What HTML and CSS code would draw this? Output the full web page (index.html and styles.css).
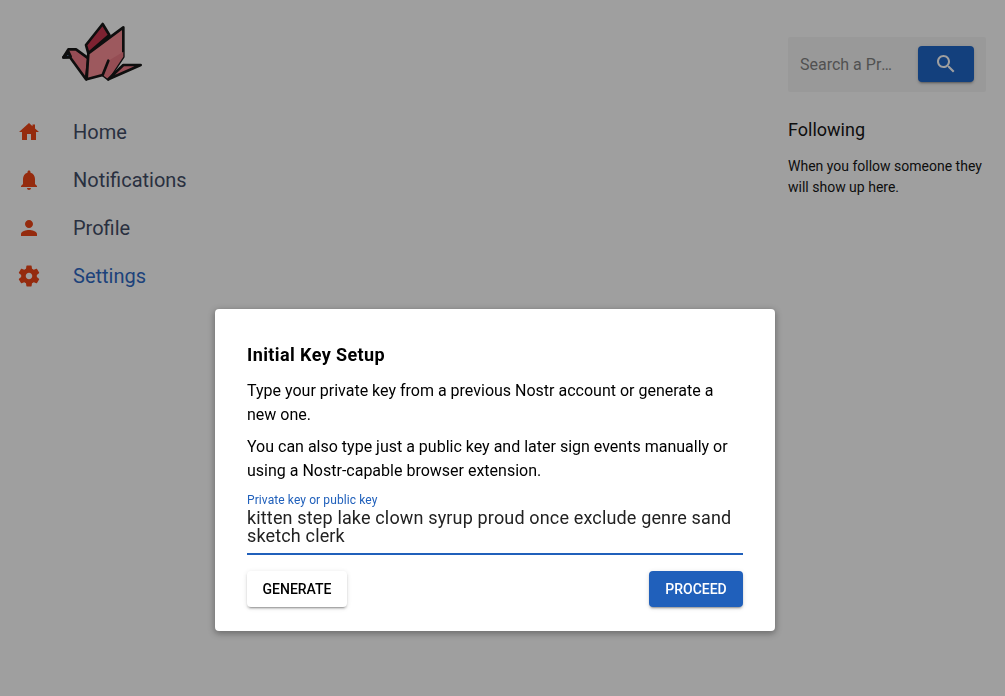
FILE: index.html
```html
<!DOCTYPE html>
<html lang="en">
<head>
  <meta charset="UTF-8" />
  <title>Initial Key Setup</title>
  <link rel="stylesheet" href="styles.css">
</head>
<body>
  <div class="page">
    <aside class="sidebar">
      <svg class="logo" viewBox="0 0 360 240" width="120" height="80">
        <path class="logo-dark" d="M138 105 L188 42 L208 75 L145 130 Z" />
        <path class="logo-mid" d="M70 142 L85 118 L108 118 L145 145 L138 208 L90 142 Z" />
        <path class="logo-light" d="M145 130 L250 52 L250 140 L205 208 L188 195 L140 208 Z" />
        <path class="logo-shade" d="M205 152 L250 125 L250 140 L205 208 L188 195 Z" />
        <path class="logo-mid" d="M205 208 L250 165 L302 165 Z" />
        <path class="logo-beak" d="M70 142 L85 125 L92 140 Z" />
        <path class="logo-fold" d="M205 152 L188 195" />
      </svg>
      <nav class="nav">
        <a class="nav-item">
          <svg class="nav-icon" viewBox="0 0 24 24"><path d="M2 12 L12 3 L15.5 6.2 V4.5 H18 V8.4 L22 12 H19 V20 H14 V14 H10 V20 H5 V12 Z" /></svg>
          <span>Home</span>
        </a>
        <a class="nav-item">
          <svg class="nav-icon" viewBox="0 0 24 24"><path d="M12 22c1.1 0 2-.9 2-2h-4c0 1.1.89 2 2 2zm6-6v-5c0-3.07-1.64-5.64-4.5-6.32V4c0-.83-.67-1.5-1.5-1.5s-1.5.67-1.5 1.5v.68C7.63 5.36 6 7.92 6 11v5l-2 2v1h16v-1l-2-2z" /></svg>
          <span>Notifications</span>
        </a>
        <a class="nav-item">
          <svg class="nav-icon" viewBox="0 0 24 24"><path d="M12 12c2.21 0 4-1.79 4-4s-1.79-4-4-4-4 1.79-4 4 1.79 4 4 4zm0 2c-2.67 0-8 1.34-8 4v2h16v-2c0-2.66-5.33-4-8-4z" /></svg>
          <span>Profile</span>
        </a>
        <a class="nav-item nav-active">
          <svg class="nav-icon" viewBox="1 1 22 22"><path d="M19.14 12.94c.04-.3.06-.61.06-.94 0-.32-.02-.64-.07-.94l2.03-1.58c.18-.14.23-.41.12-.61l-1.92-3.32c-.12-.22-.37-.29-.59-.22l-2.39.96c-.5-.38-1.03-.7-1.62-.94l-.36-2.54c-.04-.24-.24-.41-.48-.41h-3.84c-.24 0-.43.17-.47.41l-.36 2.54c-.59.24-1.13.57-1.62.94l-2.39-.96c-.22-.08-.47 0-.59.22L2.74 8.87c-.12.21-.08.47.12.61l2.03 1.58c-.05.3-.09.63-.09.94s.02.64.07.94l-2.03 1.58c-.18.14-.23.41-.12.61l1.92 3.32c.12.22.37.29.59.22l2.39-.96c.5.38 1.03.7 1.62.94l.36 2.54c.05.24.24.41.48.41h3.84c.24 0 .44-.17.47-.41l.36-2.54c.59-.24 1.13-.56 1.62-.94l2.39.96c.22.08.47 0 .59-.22l1.92-3.32c.12-.22.07-.47-.12-.61l-2.01-1.58zM12 15c-1.66 0-3-1.34-3-3s1.34-3 3-3 3 1.34 3 3-1.34 3-3 3z" /></svg>
          <span>Settings</span>
        </a>
      </nav>
    </aside>

    <aside class="rightbar">
      <div class="search">
        <input class="search-input" type="text" placeholder="Search a Profile">
        <button class="btn search-btn">
          <svg viewBox="0 0 24 24" width="24" height="24"><path d="M15.5 14h-.79l-.28-.27C15.41 12.59 16 11.11 16 9.5 16 5.91 13.09 3 9.5 3S3 5.91 3 9.5 5.91 16 9.5 16c1.61 0 3.09-.59 4.23-1.57l.27.28v.79l5 4.99L20.49 19l-4.99-5zm-6 0C7.01 14 5 11.99 5 9.5S7.01 5 9.5 5 14 7.01 14 9.5 11.99 14 9.5 14z" /></svg>
        </button>
      </div>
      <h2 class="following-title">Following</h2>
      <p class="following-text">When you follow someone they will show up here.</p>
    </aside>
  </div>

  <div class="overlay">
    <div class="dialog">
      <h1 class="dialog-title">Initial Key Setup</h1>
      <p class="dialog-text">Type your private key from a previous Nostr account or generate a new one.</p>
      <p class="dialog-text">You can also type just a public key and later sign events manually or using a Nostr-capable browser extension.</p>
      <label class="field">
        <span class="field-label">Private key or public key</span>
        <textarea class="field-input" rows="2">kitten step lake clown syrup proud once exclude genre sand sketch clerk</textarea>
      </label>
      <div class="dialog-actions">
        <button class="btn btn-light">Generate</button>
        <button class="btn btn-primary">Proceed</button>
      </div>
    </div>
  </div>
</body>
</html>
```

FILE: styles.css
```css
* {
  box-sizing: border-box;
}

body {
  margin: 0;
  height: 696px;
  overflow: hidden;
  font-family: Roboto, "Liberation Sans", sans-serif;
  background-color: #fff;
  color: #000;
}

.page {
  display: flex;
  justify-content: space-between;
  padding-right: 19px;
}

/* sidebar */
.sidebar {
  width: 300px;
  padding-top: 10px;
}

.logo {
  display: block;
  margin-left: 40px;
  margin-bottom: 18px;
}

.logo path {
  stroke: #000;
  stroke-width: 8;
  stroke-linejoin: round;
  stroke-linecap: round;
}

.logo-dark { fill: #c3243f; }
.logo-mid { fill: #f0707e; }
.logo-light { fill: #fc858e; }
.logo-beak { fill: #6fa8f0; }
.logo-fold { fill: none; }

.logo .logo-shade {
  fill: #ee6f7c;
  stroke: none;
}

.nav-item {
  display: flex;
  align-items: center;
  gap: 32px;
  height: 48px;
  padding-left: 17px;
  font-size: 20px;
  color: #313c58;
}

.nav-active {
  color: #1a5cc0;
}

.nav-icon {
  width: 24px;
  height: 24px;
  fill: #ed3300;
}

/* right column */
.rightbar {
  width: 198px;
  padding-top: 37px;
}

.search {
  display: flex;
  align-items: center;
  justify-content: space-between;
  height: 55px;
  padding: 0 12px 1px;
  background-color: #f5f5f5;
  border-radius: 2px;
}

.search-input {
  width: 96px;
  padding: 0;
  border: none;
  outline: none;
  background: none;
  font-family: inherit;
  font-size: 16px;
  text-overflow: ellipsis;
}

.search-input::placeholder {
  color: #777;
  opacity: 1;
}

.search-btn {
  width: 56px;
  min-width: 56px;
  padding: 0;
  background-color: #0a58c4;
}

.search-btn svg {
  display: block;
  margin: auto;
  fill: #fff;
}

.following-title {
  margin: 26px 0 0;
  font-size: 18px;
  font-weight: 400;
  line-height: 24px;
}

.following-text {
  margin: 14px 0 0;
  font-size: 14px;
  line-height: 21px;
}

/* buttons */
.btn {
  height: 36px;
  padding: 0;
  border: none;
  border-radius: 4px;
  font-family: inherit;
  font-size: 14px;
  font-weight: 500;
  text-transform: uppercase;
  box-shadow: 0 3px 1px -2px rgba(0, 0, 0, .2), 0 2px 2px 0 rgba(0, 0, 0, .14), 0 1px 5px 0 rgba(0, 0, 0, .12);
}

.btn-primary {
  width: 94px;
  background-color: #2060bb;
  color: #fff;
}

.btn-light {
  width: 100px;
  background-color: #fff;
  color: #000;
}

/* dialog */
.overlay {
  position: fixed;
  inset: 0;
  display: flex;
  justify-content: center;
  align-items: flex-end;
  padding: 0 15px 65px 0;
  background-color: rgba(33, 33, 33, .43);
}

.dialog {
  width: 560px;
  height: 322px;
  padding: 32px 32px 24px;
  background-color: #fff;
  border-radius: 4px;
  box-shadow: 0 2px 6px 1px rgba(0, 0, 0, .3);
}

.dialog-title {
  margin: 0 0 10px;
  font-size: 18px;
  font-weight: 700;
  letter-spacing: 0.4px;
  line-height: 28px;
}

.dialog-text {
  margin: 0 0 8px;
  font-size: 16px;
  line-height: 24px;
}

.field {
  display: block;
  margin-top: 10px;
  border-bottom: 2px solid #2060bb;
}

.field-label {
  display: block;
  margin-bottom: 2px;
  font-size: 12px;
  letter-spacing: 0.1px;
  line-height: 14px;
  color: #2060bb;
}

.field-input {
  display: block;
  width: 100%;
  height: 44px;
  padding: 0;
  border: none;
  outline: none;
  resize: none;
  overflow: hidden;
  font-family: inherit;
  font-size: 18px;
  letter-spacing: 0.155px;
  line-height: 18px;
  color: #222;
}

.dialog-actions {
  display: flex;
  justify-content: space-between;
  margin-top: 16px;
}
```
